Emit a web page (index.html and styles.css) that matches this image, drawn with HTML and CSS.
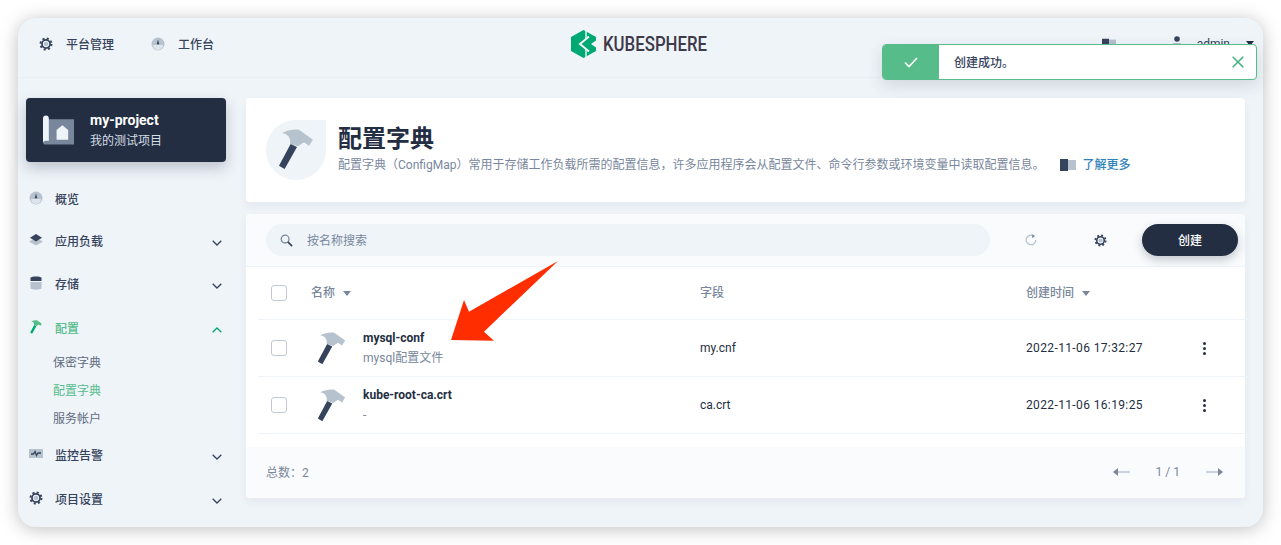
FILE: index.html
```html
<!DOCTYPE html>
<html lang="zh-Hans">
<head>
  <meta charset="UTF-8">
  <title>配置字典 - KubeSphere</title>
  <link rel="stylesheet" href="styles.css">
</head>
<body>
  <svg class="defs" width="0" height="0">
    <symbol id="hammer" viewBox="0 0 36 41">
      <path class="hammer-head" d="M4 4C10 1 16 0 21 .7L35 10.7 31 16.7 26 13.3 20 17.3 12 14.7C13 9 10 5 4 4Z"/>
      <path class="hammer-handle" d="M12.6 15 19 18 6.6 40 1 36.7Z"/>
    </symbol>
    <symbol id="gear" viewBox="0 0 16 16">
      <circle cx="8" cy="8" r="4.6" fill="none" stroke="currentColor" stroke-width="2"/>
      <circle cx="8" cy="8" r="6.3" fill="none" stroke="currentColor" stroke-width="2.2" stroke-dasharray="2.4 2.55"/>
      <circle cx="8" cy="8" r="2.6" fill="#b6c2cd"/>
    </symbol>
    <symbol id="dial" viewBox="0 0 14 14">
      <circle cx="7" cy="7" r="6.5" fill="#b6c2cd"/>
      <path d="M2 8a5 5 0 0 0 10 0Z" fill="#dfe5ec"/>
      <path d="M7 2.5 8.3 7.2H5.7Z" fill="#36435c"/>
    </symbol>
    <symbol id="chev" viewBox="0 0 10 6">
      <path d="M.7.7 5 5 9.3.7" fill="none" stroke="currentColor" stroke-width="1.3"/>
    </symbol>
    <symbol id="book" viewBox="0 0 16 12">
      <path d="M0 0h8v12H0Z" fill="#36435c"/>
      <path d="M8 1h8v10H8Z" fill="#b6c2cd"/>
    </symbol>
  </svg>

  <div class="window">
    <header class="topbar">
      <nav class="topbar-left">
        <a class="top-link"><svg class="ico-14"><use href="#gear"/></svg>平台管理</a>
        <a class="top-link"><svg class="ico-14"><use href="#dial"/></svg>工作台</a>
      </nav>
      <div class="logo">
        <svg class="logo-mark" viewBox="0 0 25 28">
          <path d="M12.5 0 25 7v14l-12.5 7L0 21V7Z" fill="#00a971"/>
          <path d="M15 0v9M15 19v9" stroke="#eff4f9" stroke-width="1.4"/>
          <path d="M18 6.5 9 14l9 7.5" fill="none" stroke="#eff4f9" stroke-width="2"/>
          <path d="M25 10.5 20 14l5 3.5Z" fill="#eff4f9"/>
        </svg>
        <span class="logo-text">KUBESPHERE</span>
      </div>
      <div class="topbar-right">
        <svg class="book-top"><use href="#book"/></svg>
        <svg class="person" viewBox="0 0 10 16">
          <circle cx="5" cy="3" r="2.8" fill="#36435c"/>
          <path d="M1 7h8v8H1Z" fill="#b6c2cd"/>
        </svg>
        <span class="admin">admin</span>
        <span class="caret caret-dark"></span>
      </div>
    </header>

    <div class="main">
      <aside class="sidebar">
        <div class="project">
          <svg class="project-icon" viewBox="0 0 32 30">
            <path d="M0 4h32v26H3a3 3 0 0 1-3-3Z" fill="#79879c"/>
            <path d="M0 3a3 3 0 0 1 6 0v23H3a3 3 0 0 0-3 2Z" fill="#eff4f9"/>
            <path d="M14 15l6-5 6 5v10H14Z" fill="#eff4f9"/>
          </svg>
          <div>
            <div class="project-name">my-project</div>
            <div class="project-desc">我的测试项目</div>
          </div>
        </div>

        <nav class="nav">
          <a class="nav-item nav-item-short"><svg class="ico-14"><use href="#dial"/></svg>概览</a>
          <a class="nav-item nav-item-short">
            <svg class="ico-14" viewBox="0 0 14 14">
              <path d="M7 5 14 8.5 7 12.5 0 8.5Z" fill="#b6c2cd"/>
              <path d="M7 1 13 4.7 7 8.5 1 4.7Z" fill="#36435c"/>
            </svg>
            应用负载<svg class="chev"><use href="#chev"/></svg>
          </a>
          <a class="nav-item">
            <svg class="ico-14" viewBox="0 0 14 14">
              <path d="M1.5 1.5C3 0 11 0 12.5 1.5V5h-11Z" fill="#36435c"/>
              <path d="M1.5 6h11v6.500c-1.500 1.500-9.500 1.500-11 0Z" fill="#b6c2cd"/>
            </svg>
            存储<svg class="chev"><use href="#chev"/></svg>
          </a>
          <a class="nav-item nav-item-active">
            <svg class="ico-14 hammer-green"><use href="#hammer"/></svg>
            配置<svg class="chev chev-up"><use href="#chev"/></svg>
          </a>
          <div class="subnav">
            <a class="sub-item">保密字典</a>
            <a class="sub-item sub-item-active">配置字典</a>
            <a class="sub-item">服务帐户</a>
          </div>
          <a class="nav-item">
            <svg class="ico-14" viewBox="0 0 14 14">
              <path d="M0 2h14v9H0Z" fill="#b6c2cd"/>
              <path d="M2 7h2.5L6 4.500 7.500 8.500 9 6h3" fill="none" stroke="#36435c" stroke-width="1.3"/>
            </svg>
            监控告警<svg class="chev"><use href="#chev"/></svg>
          </a>
          <a class="nav-item"><svg class="ico-14"><use href="#gear"/></svg>项目设置<svg class="chev"><use href="#chev"/></svg></a>
        </nav>
      </aside>

      <section class="content">
        <div class="banner">
          <div class="banner-icon"><svg class="hammer-lg"><use href="#hammer"/></svg></div>
          <div class="banner-text">
            <h1 class="banner-title">配置字典</h1>
            <p class="banner-desc">配置字典（ConfigMap）常用于存储工作负载所需的配置信息，许多应用程序会从配置文件、命令行参数或环境变量中读取配置信息。<svg class="book-inline"><use href="#book"/></svg><a class="learn">了解更多</a></p>
          </div>
        </div>

        <div class="panel">
          <div class="toolbar">
            <div class="search">
              <svg class="search-icon" viewBox="0 0 14 14">
                <circle cx="5.5" cy="5.5" r="4.2" fill="none" stroke="#79879c" stroke-width="1.4"/>
                <path d="M8.5 8.5 13 13" stroke="#36435c" stroke-width="1.8"/>
              </svg>
              <span class="search-text">按名称搜索</span>
            </div>
            <svg class="refresh" viewBox="0 0 12 12">
              <path d="M8.5 1.8A4.800 4.800 0 1 0 10.8 6" fill="none" stroke="#b6c2cd" stroke-width="1.3"/>
              <path d="M6.8.3 10 2 7.500 4.300Z" fill="#79879c"/>
            </svg>
            <svg class="ico-14 tool-gear"><use href="#gear"/></svg>
            <button class="btn-create">创建</button>
          </div>

          <div class="row row-head">
            <span class="check"></span>
            <span class="head-cell">名称<i class="caret"></i></span>
            <span class="head-cell">字段</span>
            <span class="head-cell">创建时间<i class="caret"></i></span>
            <span></span>
          </div>
          <div class="row">
            <span class="check"></span>
            <div class="name-cell">
              <svg class="hammer-sm"><use href="#hammer"/></svg>
              <div class="name-text">
                <div class="name">mysql-conf</div>
                <div class="name-desc">mysql配置文件</div>
              </div>
            </div>
            <span>my.cnf</span>
            <span class="time">2022-11-06 17:32:27</span>
            <span class="kebab"><i></i><i></i><i></i></span>
          </div>
          <div class="row">
            <span class="check"></span>
            <div class="name-cell">
              <svg class="hammer-sm"><use href="#hammer"/></svg>
              <div class="name-text">
                <div class="name">kube-root-ca.crt</div>
                <div class="name-desc">-</div>
              </div>
            </div>
            <span>ca.crt</span>
            <span class="time">2022-11-06 16:19:25</span>
            <span class="kebab"><i></i><i></i><i></i></span>
          </div>

          <div class="foot">
            <span>总数：2</span>
            <div class="pager">
              <svg class="pager-arrow" viewBox="0 0 17 8"><path d="M5 4h12" stroke="#b6c2cd" stroke-width="1.4"/><path d="M0 4 5 0v8Z" fill="#79879c"/></svg>
              <span>1 / 1</span>
              <svg class="pager-arrow" viewBox="0 0 17 8"><path d="M0 4h12" stroke="#b6c2cd" stroke-width="1.4"/><path d="M17 4 12 0v8Z" fill="#79879c"/></svg>
            </div>
          </div>
        </div>
      </section>
    </div>

    <div class="toast">
      <div class="toast-mark">
        <svg class="toast-check" viewBox="0 0 14 11"><path d="M1 5.5 5 9.5 13 1" fill="none" stroke="#fff" stroke-width="1.6"/></svg>
      </div>
      <span class="toast-text">创建成功。</span>
      <svg class="toast-close" viewBox="0 0 12 12"><path d="M.7.7l10.6 10.6M11.3.7.7 11.3" stroke="#3fb27f" stroke-width="1.5"/></svg>
    </div>

    <svg class="arrow" viewBox="0 0 108 80">
      <path d="M1 79 14 39 19 50.700 108 0 34 70.700 44 79.700Z" fill="#ff2d00"/>
    </svg>
  </div>
</body>
</html>
```

FILE: styles.css
```css
* { box-sizing: border-box; }
body { margin: 0; background: #fff; font-family: Roboto, "Noto Sans CJK SC", sans-serif; font-size: 12px; color: #36435c; overflow: hidden; }
.defs { position: absolute; }
a { color: inherit; text-decoration: none; }
svg { display: block; flex: none; }

.window { position: relative; width: 1245px; height: 509px; margin: 18px; background: #eff4f9; border-radius: 18px; box-shadow: 0 2px 18px rgba(0, 0, 0, .25); }

.ico-14 { width: 14px; height: 14px; }

.topbar { display: grid; grid-template-columns: minmax(0, 1fr) auto minmax(0, 1fr); height: 60px; padding-bottom: 8px; align-items: center; border-bottom: 1px solid #e9eef4; }
.topbar-left { display: flex; gap: 37px; padding-left: 21px; }
.top-link { display: flex; align-items: center; gap: 13px; font-weight: 500; color: #36435c; }
.logo { display: flex; align-items: center; gap: 7px; margin-left: -5px; }
.logo-mark { width: 25px; height: 28px; }
.logo-text { width: 103px; font-size: 21px; font-weight: 500; color: #3e3a4a; white-space: nowrap; transform: scaleX(.8); transform-origin: left center; }
.topbar-right { display: flex; align-items: center; justify-content: flex-end; padding-right: 9px; white-space: nowrap; }
.book-top { width: 14px; height: 12px; }
.person { width: 10px; height: 16px; margin-left: 56px; }
.admin { margin-left: 15px; color: #36435c; }

.main { display: flex; padding: 20px 0 0 8px; gap: 20px; }

.sidebar { width: 200px; flex: none; }
.project { display: flex; align-items: center; gap: 16px; height: 64px; padding-left: 17px; background: #242e42; border-radius: 4px; color: #fff; box-shadow: 0 6px 14px rgba(36, 46, 66, .25); }
.project-icon { width: 31px; height: 30px; }
.project-name { font-size: 14px; font-weight: 700; line-height: 20px; }
.project-desc { line-height: 20px; margin-top: 1px; color: #d5dee7; }

.nav { margin-top: 15px; }
.nav-item { display: flex; align-items: center; height: 44px; padding-left: 3px; gap: 12px; font-weight: 500; color: #36435c; }
.nav-item-short { height: 42px; }
.nav-item-active { color: #55bc8a; }
.chev { width: 10px; height: 6px; margin: 5px 4px 0 auto; color: #36435c; }
.chev-up { transform: rotate(180deg); color: #00a971; }
.hammer-green { --head: #55bc8a; --handle: #00a971; }
.subnav { margin-bottom: -1px; }
.sub-item { display: block; height: 28px; line-height: 28px; padding-left: 27px; color: #5f6b80; }
.sub-item-active { color: #55bc8a; }

.hammer-head { fill: var(--head, #b6c2cd); }
.hammer-handle { fill: var(--handle, #36435c); }

.content { width: 999px; flex: none; }
.banner { display: flex; align-items: center; gap: 12px; height: 104px; padding: 0 20px; background: #fff; border-radius: 4px; box-shadow: 0 4px 8px rgba(36, 46, 66, .06); }
.banner-icon { display: flex; align-items: center; justify-content: center; width: 60px; height: 60px; background: #eff4f9; border-radius: 50% 0 50% 50%; }
.hammer-lg { width: 36px; height: 41px; margin-top: -1px; }
.banner-text { margin-bottom: 7px; }
.banner-title { margin: 0; font-size: 24px; line-height: 36px; font-weight: 700; color: #242e42; }
.banner-desc { display: flex; align-items: center; margin: 0; line-height: 16px; color: #79879c; white-space: nowrap; }
.book-inline { width: 16px; height: 12px; margin: 0 6px 0 16px; }
.learn { color: #2f83bb; font-weight: 500; }

.panel { margin-top: 12px; background: #fff; border-radius: 4px; box-shadow: 0 4px 8px rgba(36, 46, 66, .06); }
.toolbar { display: flex; align-items: center; height: 53px; padding: 0 7px 0 20px; background: #f9fbfd; border-bottom: 1px solid #eff4f9; border-radius: 4px 4px 0 0; }
.search { display: flex; align-items: center; gap: 14px; flex: none; width: 724px; height: 32px; padding-left: 14px; background: #eff4f9; border-radius: 16px; color: #79879c; }
.search-icon { width: 13px; height: 13px; }
.search-text { margin-top: -2px; }
.refresh { width: 12px; height: 12px; margin-left: 35px; }
.tool-gear { margin-left: 57px; width: 13px; height: 13px; }
.btn-create { flex: none; width: 96px; height: 32px; margin-left: 35px; padding: 0 0 2px; border: 0; border-radius: 16px; background: #242e42; color: #fff; font: inherit; font-weight: 500; box-shadow: 0 4px 10px rgba(36, 46, 66, .25); }

.row { display: grid; grid-template-columns: 40px 389px 326px 177px 1fr; align-items: center; height: 57px; margin-left: 12px; padding-left: 13px; border-bottom: 1px solid #eff4f9; color: #242e42; }
.row-head { height: 53px; color: #79879c; font-weight: 500; }
.head-cell { margin-top: -3px; }
.check { width: 16px; height: 16px; border: 1px solid #c1c9d1; border-radius: 3px; background: #fff; }
.caret { display: inline-block; width: 0; height: 0; margin-left: 8px; vertical-align: 1px; border-left: 4.5px solid transparent; border-right: 4.5px solid transparent; border-top: 5px solid #79879c; }
.caret-dark { margin-left: 16px; border-top-color: #242e42; }
.name-cell { display: flex; align-items: center; gap: 17px; padding-left: 6px; }
.hammer-sm { width: 29px; height: 33px; }
.name-text { margin-top: -2px; }
.name { font-weight: 700; line-height: 20px; }
.name-desc { line-height: 18px; margin-top: 1px; color: #79879c; }
.time { letter-spacing: .37px; }
.kebab { display: flex; flex-direction: column; gap: 2px; width: 3px; }
.kebab i { width: 3px; height: 3px; border-radius: 50%; background: #242e42; }

.foot { display: flex; align-items: center; justify-content: space-between; height: 51px; margin-top: 13px; padding: 0 22px 2px 20px; background: #f9fbfd; border-radius: 0 0 4px 4px; color: #79879c; }
.pager { display: flex; align-items: center; gap: 26px; }
.pager-arrow { width: 17px; height: 8px; }

.toast { position: absolute; top: 26px; left: 864px; display: flex; align-items: center; width: 375px; height: 36px; background: #fff; border: 1px solid #55bc8a; border-radius: 4px; box-shadow: 0 6px 16px rgba(36, 46, 66, .14); }
.toast-mark { display: flex; align-items: center; justify-content: center; width: 56px; height: 100%; background: #55bc8a; border-radius: 3px 0 0 3px; }
.toast-check { width: 14px; height: 11px; }
.toast-text { margin: -2px 0 0 15px; font-weight: 500; color: #36435c; }
.toast-close { width: 12px; height: 12px; margin: 0 12px 0 auto; }

.arrow { position: absolute; left: 432px; top: 243px; width: 108px; height: 80px; }
```
